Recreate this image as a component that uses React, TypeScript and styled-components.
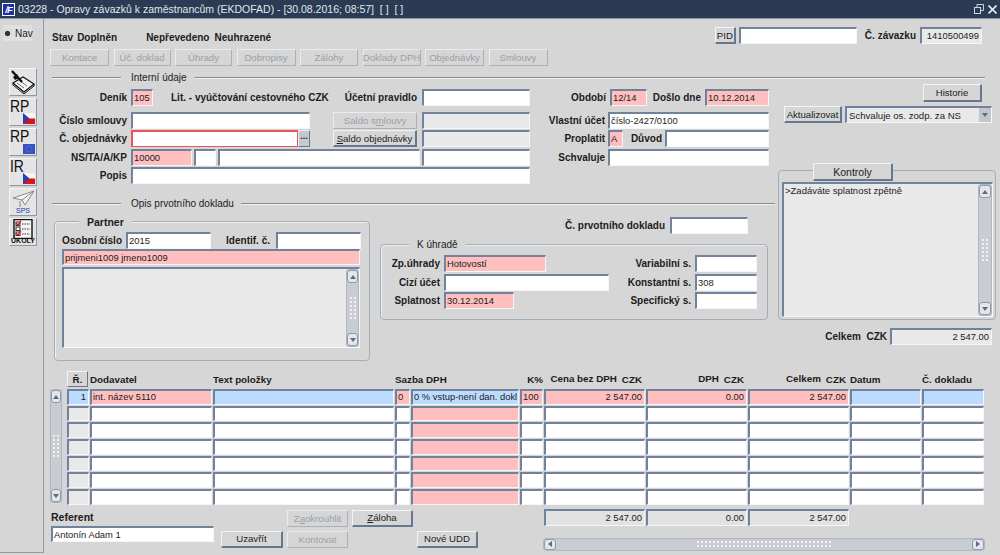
import React from "react";
import styled, { createGlobalStyle } from "styled-components";

const Colors = {
  bg: "#d6d6d6",
  title: "#2a3b53",
  dark: "#71839c",
  light: "#f6f6f6",
  pink: "#ffbfbf",
  blue: "#bbdcff",
  grey: "#e9e9e9",
  text: "#1c1c1c",
  disabled: "#98a1aa",
};

const Global = createGlobalStyle`
  html, body { margin: 0; padding: 0; background: ${Colors.bg}; }
  body { font-family: "Liberation Sans", Arial, sans-serif; font-size: 10px; color: ${Colors.text}; }
`;

const Page = styled.div`
  width: 1000px;
  height: 555px;
  overflow: hidden;
  display: flex;
  flex-direction: column;
  background: ${Colors.bg};
`;

const TitleBar = styled.div`
  height: 19px;
  flex: none;
  background: ${Colors.title};
  color: #e2e6ec;
  font-size: 10.5px;
  display: flex;
  align-items: center;
  padding: 0 2px;
  box-sizing: border-box;
  border-bottom: 1px solid #8d97a5;
`;

const AppLogo = styled.span`
  width: 13px;
  height: 13px;
  box-sizing: border-box;
  border: 1px solid #fff;
  background: #1c2fa8;
  color: #fff;
  font: italic bold 9.5px/11px "Liberation Sans", sans-serif;
  letter-spacing: -1px;
  text-align: center;
  margin-right: 3px;
  flex: none;
`;

const TitleText = styled.span`
  flex: 1;
  white-space: pre;
`;

const Body = styled.div`
  flex: 1;
  display: flex;
  min-height: 0;
`;

const Rail = styled.div`
  width: 44px;
  height: 534px;
  flex: none;
  box-sizing: border-box;
  border-right: 1px solid #8f9bab;
  border-bottom: 1px solid #8f9bab;
  display: flex;
  flex-direction: column;
  align-items: flex-start;
`;

const NavRow = styled.div`
  margin: 6px 0 0 3px;
  height: 16px;
  width: 29px;
  background: #e0e0e0;
  display: flex;
  align-items: center;
  gap: 3px;
  font-size: 10px;
`;

const Radio = styled.span`
  width: 9px;
  height: 9px;
  border-radius: 50%;
  background: radial-gradient(circle, #333 0 35%, #eee 50%, #8b96a6 100%);
  flex: none;
`;

const Tiles = styled.div`
  margin: 27px 0 0 9px;
  display: flex;
  flex-direction: column;
  gap: 2px;
`;

const Tile = styled.div`
  position: relative;
  width: 28px;
  height: 28px;
  box-sizing: border-box;
  background: #e4e4e4;
  border: 1px solid;
  border-color: #f5f5f5 #8b97a8 #8b97a8 #f5f5f5;
  overflow: hidden;
`;

const TileText = styled.span`
  position: absolute;
  left: 0;
  top: -1px;
  font-size: 17px;
  line-height: 18px;
  color: #111;
  transform: scaleX(0.82);
  transform-origin: left top;
`;

const FlagBox = styled.svg`
  position: absolute;
  right: 1px;
  bottom: 1px;
`;

const TileCaption = styled.span<{ $color: string }>`
  position: absolute;
  left: 0;
  right: 0;
  bottom: 0;
  text-align: center;
  font-size: 7px;
  line-height: 8px;
  font-weight: ${(p) => (p.$color === "#111" ? 700 : 400)};
  color: ${(p) => p.$color};
`;

const Main = styled.div`
  flex: 1;
  min-width: 0;
  display: flex;
  flex-direction: column;
`;

const TopBar = styled.div`
  margin-top: 8px;
  height: 17px;
  display: flex;
  align-items: center;
  padding: 0 18px 0 8px;
`;

const StatusGroup = styled.div`
  display: flex;
  padding-top: 4px;
`;

const Strong = styled.span<{ $ml?: number; $w?: number }>`
  font-weight: 700;
  white-space: nowrap;
  flex: none;
  margin-left: ${(p) => p.$ml ?? 0}px;
  ${(p) => (p.$w ? `width: ${p.$w}px;` : "")}
`;

const TopRight = styled.div`
  margin-left: auto;
  display: flex;
  align-items: center;
`;

const Toolbar = styled.div`
  margin: 5px 0 0 6px;
  display: flex;
  gap: 4.5px;
`;

const Btn = styled.div<{ $w: number; $off?: boolean; $h?: number; $ml?: number; $col?: number; $row?: number }>`
  width: ${(p) => p.$w}px;
  height: ${(p) => p.$h ?? 17}px;
  box-sizing: border-box;
  flex: none;
  margin-left: ${(p) => p.$ml ?? 0}px;
  ${(p) => (p.$col ? `grid-column: ${p.$col}; grid-row: ${p.$row};` : "")}
  display: flex;
  align-items: center;
  justify-content: center;
  white-space: nowrap;
  font-size: 9.6px;
  background: ${Colors.bg};
  color: ${(p) => (p.$off ? Colors.disabled : Colors.text)};
  border: 1px solid;
  border-color: ${(p) =>
    p.$off ? "#ececec #a9b1bc #a9b1bc #ececec" : "#f4f4f4 #66788f #66788f #f4f4f4"};
  border-radius: 1px;
  ${(p) => (p.$off ? "" : "border-width: 1px 2px 2px 1px;")}
`;

const Sep = styled.div<{ $w: number; $mt: number }>`
  width: ${(p) => p.$w}px;
  margin: ${(p) => p.$mt}px 0 0 8px;
  height: 10px;
  display: flex;
  align-items: center;
  flex: none;
`;

const SepLine = styled.span<{ $w?: number }>`
  height: 1px;
  background: #8a8a8a;
  box-shadow: 0 1px 0 #f0f0f0;
  ${(p) => (p.$w ? `width: ${p.$w}px; flex: none;` : "flex: 1;")}
`;

const SepTitle = styled.span`
  margin: 0 7px 0 10px;
  white-space: nowrap;
`;

const Split = styled.div`
  margin-top: 2px;
  display: flex;
  height: 276px;
  flex: none;
`;

const LeftPane = styled.div`
  width: 734px;
  flex: none;
`;

const FormRow = styled.div<{ $mt?: number }>`
  display: flex;
  align-items: center;
  height: 17px;
  margin-top: ${(p) => p.$mt ?? 0}px;
`;

const Label = styled.span<{ $w: number; $ml?: number }>`
  width: ${(p) => p.$w}px;
  margin-left: ${(p) => p.$ml ?? 0}px;
  flex: none;
  text-align: right;
  font-weight: 700;
  white-space: nowrap;
`;

type Tone = "white" | "pink" | "blue" | "grey" | "sum";

const toneBg: Record<Tone, string> = {
  white: "#fff",
  pink: Colors.pink,
  blue: Colors.blue,
  grey: Colors.grey,
  sum: "#e2e2e2",
};

const Field = styled.div<{ $w?: number; $ml?: number; $tone?: Tone; $right?: boolean; $alert?: boolean; $h?: number }>`
  ${(p) => (p.$w ? `width: ${p.$w}px; flex: none;` : "")}
  height: ${(p) => (p.$h ? `${p.$h}px` : "17px")};
  margin-left: ${(p) => p.$ml ?? 0}px;
  box-sizing: border-box;
  background: ${(p) => toneBg[p.$tone ?? "white"]};
  border-style: solid;
  border-width: 2px 1px 1px 2px;
  border-color: ${(p) =>
    p.$alert
      ? "#ea5557"
      : `${Colors.dark} ${Colors.light} ${Colors.light} ${Colors.dark}`};
  padding: 0 2px 0 1px;
  font-size: 9.4px;
  line-height: 13px;
  overflow: hidden;
  white-space: nowrap;
  text-align: ${(p) => (p.$right ? "right" : "left")};
  min-width: 0;
`;

const EllipsisBtn = styled.div`
  width: 12px;
  height: 17px;
  flex: none;
  box-sizing: border-box;
  background: #c6c9cf;
  border: 1px solid;
  border-color: #eee #66788f #66788f #eee;
  text-align: center;
  font-weight: 700;
  font-size: 9px;
  line-height: 10px;
`;

const Frame = styled.div<{ $w: number; $h: number; $ml?: number; $mt?: number }>`
  width: ${(p) => p.$w}px;
  height: ${(p) => p.$h}px;
  margin-left: ${(p) => p.$ml ?? 0}px;
  margin-top: ${(p) => p.$mt ?? 0}px;
  box-sizing: border-box;
  flex: none;
  border: 1px solid #a3aebd;
  border-radius: 4px;
  box-shadow: inset 1px 1px 0 #eee;
`;

const Legend = styled.div<{ $ml: number; $bold?: boolean }>`
  display: block;
  width: max-content;
  height: 12px;
  line-height: 12px;
  margin: -6px 0 0 ${(p) => p.$ml}px;
  padding: 0 8px;
  background: ${Colors.bg};
  font-size: ${(p) => (p.$bold ? "10.5px" : "10px")};
  font-weight: ${(p) => (p.$bold ? 700 : 400)};
`;

const Columns = styled.div`
  display: flex;
  align-items: flex-start;
`;

const PartnerInner = styled.div`
  padding-left: 7px;
`;

const PayColumn = styled.div<{ $w?: number }>`
  ${(p) => (p.$w ? `width: ${p.$w}px; flex: none;` : "")}
`;

const MemoBox = styled.div<{ $w: number; $h: number; $mt?: number }>`
  width: ${(p) => p.$w}px;
  height: ${(p) => p.$h}px;
  margin-top: ${(p) => p.$mt ?? 0}px;
  flex: none;
  box-sizing: border-box;
  background: ${Colors.grey};
  border-style: solid;
  border-width: 2px 1px 1px 2px;
  border-color: ${Colors.dark} ${Colors.light} ${Colors.light} ${Colors.dark};
  display: flex;
  justify-content: space-between;
`;

const MemoText = styled.div`
  padding: 1px 0 0 1px;
  font-size: 9.5px;
`;

const ScrollV = styled.div<{ $w: number; $h?: number }>`
  width: ${(p) => p.$w}px;
  ${(p) => (p.$h ? `height: ${p.$h}px;` : "")}
  flex: none;
  display: flex;
  flex-direction: column;
  background: #c9ccd1;
  box-sizing: border-box;
  border: 1px solid #aeb7c3;
  border-radius: 3px;
`;

const ArrowBtn = styled.div`
  height: 13px;
  flex: none;
  background: #e4e6ea;
  border: 1px solid #8e9bad;
  box-sizing: border-box;
  border-radius: 3px;
  display: flex;
  align-items: center;
  justify-content: center;
`;

const ArrowUp = styled.span`
  border: 3px solid transparent;
  border-top: 0;
  border-bottom: 4px solid #5d6c80;
`;

const ArrowDown = styled.span`
  border: 3px solid transparent;
  border-bottom: 0;
  border-top: 4px solid #5d6c80;
`;

const ArrowLeft = styled.span`
  border: 3px solid transparent;
  border-left: 0;
  border-right: 4px solid #5d6c80;
`;

const ArrowRight = styled.span`
  border: 3px solid transparent;
  border-right: 0;
  border-left: 4px solid #5d6c80;
`;

const Track = styled.div`
  flex: 1;
  display: flex;
  align-items: center;
  justify-content: center;
`;

const GripV = styled.span`
  width: 8px;
  height: 24px;
  background-image: radial-gradient(circle, #f2f2f2 0 1px, transparent 1.2px);
  background-size: 4px 4px;
`;

const GripH = styled.span`
  width: 136px;
  height: 8px;
  background-image: radial-gradient(circle, #f2f2f2 0 1px, transparent 1.2px);
  background-size: 4px 4px;
`;

const RightPane = styled.div`
  width: 222px;
  flex: none;
  display: flex;
  flex-direction: column;
`;

const KontrolyFrame = styled.div`
  margin-top: 47px;
  width: 218px;
  height: 150px;
  box-sizing: border-box;
  border: 1px solid #a3aebd;
  border-radius: 4px;
  padding: 0 2px 3px 3px;
  display: flex;
  flex-direction: column;
`;

const KontrolyBtn = styled.div`
  margin: -8px 0 1px 31px;
  width: 80px;
  height: 18px;
  box-sizing: border-box;
  flex: none;
  display: flex;
  align-items: center;
  justify-content: center;
  background: ${Colors.bg};
  border: 1px solid;
  border-color: #f4f4f4 #66788f #66788f #f4f4f4;
  border-width: 1px 2px 2px 1px;
  border-radius: 1px;
  font-size: 10.5px;
`;

const Select = styled.div`
  width: 147px;
  height: 17px;
  margin-left: 3px;
  box-sizing: border-box;
  background: ${Colors.grey};
  border-style: solid;
  border-width: 2px 1px 1px 2px;
  border-color: ${Colors.dark} ${Colors.light} ${Colors.light} ${Colors.dark};
  display: flex;
  align-items: center;
  justify-content: space-between;
  padding-left: 2px;
  font-size: 9.6px;
  white-space: nowrap;
`;

const SelectArrow = styled.span`
  width: 12px;
  height: 14px;
  background: #c3c7cd;
  display: flex;
  align-items: center;
  justify-content: center;
`;

const TableWrap = styled.div`
  margin: 11px 0 0 6px;
  display: flex;
  gap: 5px;
`;

const TableScrollCol = styled.div`
  padding-top: 18px;
  display: flex;
`;

const GRID = "22px 122px 181px 15px 108px 23px 101px 101px 101px 71px 62px";

const Grid = styled.div`
  display: grid;
  grid-template-columns: ${GRID};
  column-gap: 1px;
  grid-auto-rows: 15.67px;
  row-gap: 1px;
`;

const Cell = styled.div<{ $tone: Tone; $right?: boolean }>`
  box-sizing: border-box;
  background: ${(p) => toneBg[p.$tone]};
  border-style: solid;
  border-width: 2px 1px 1px 2px;
  border-color: ${Colors.dark} ${Colors.light} ${Colors.light} ${Colors.dark};
  padding: 0 2px 0 1px;
  font-size: 9.4px;
  line-height: 12px;
  overflow: hidden;
  white-space: nowrap;
  text-align: ${(p) => (p.$right ? "right" : "left")};
`;

const TableBody = styled.div`
  flex: none;
`;

const HeadGrid = styled.div`
  display: grid;
  grid-template-columns: ${GRID};
  column-gap: 1px;
  height: 16px;
  margin-bottom: 2px;
  font-weight: 700;
  font-size: 9.8px;
  align-items: center;
`;

const HeadBtn = styled.div`
  height: 16px;
  box-sizing: border-box;
  margin-right: 1px;
  display: flex;
  align-items: center;
  justify-content: center;
  border: 1px solid;
  border-color: #f4f4f4 #66788f #66788f #f4f4f4;
  font-weight: 700;
`;

const HeadCell = styled.div<{ $right?: number; $span?: number }>`
  white-space: nowrap;
  text-align: ${(p) => (p.$right !== undefined ? "right" : "left")};
  padding-right: ${(p) => p.$right ?? 0}px;
  ${(p) => (p.$span ? `grid-column: span ${p.$span};` : "")}
`;

const Currency = styled.span`
  margin-left: 5px;
  vertical-align: -1px;
`;

const Bottom = styled.div`
  margin: 1px 0 0 7px;
  display: flex;
  align-items: flex-start;
`;

const RefCol = styled.div`
  width: 163px;
  margin-top: 5px;
  flex: none;
  display: flex;
  flex-direction: column;
  gap: 3px;
`;

const RefLabel = styled.span`
  font-weight: 700;
  font-size: 10.5px;
  line-height: 12px;
`;

const Actions = styled.div`
  margin: 4px 0 0 7px;
  display: grid;
  grid-template-columns: 62px 61px 61px 61px;
  column-gap: 4px;
  row-gap: 4px;
  flex: none;
`;

const Totals = styled.div`
  margin: 3px 0 0 66px;
  display: flex;
  flex-direction: column;
  align-items: flex-start;
`;

const TotalsRow = styled.div`
  display: flex;
  gap: 1px;
`;

const ScrollH = styled.div`
  margin: 12px 0 0 -1px;
  width: 442px;
  height: 13px;
  box-sizing: border-box;
  background: #c9ccd1;
  border: 1px solid #aeb7c3;
  border-radius: 3px;
  display: flex;
`;

const ArrowBtnH = styled(ArrowBtn)`
  height: auto;
  width: 12px;
`;

const WinButtons = styled.div`
  display: flex;
  align-items: center;
  gap: 4px;
  margin-right: 1px;
`;

const toolButtons: [string, number][] = [
  ["Kontace", 59],
  ["Úč. doklad", 57],
  ["Úhrady", 57],
  ["Dobropisy", 59],
  ["Zálohy", 58],
  ["Doklady DPH", 58],
  ["Objednávky", 59],
  ["Smlouvy", 59],
];

const CzFlag = () => (
  <FlagBox width="12" height="11" viewBox="0 0 12 11">
    <rect width="12" height="5.5" fill="#f4f4f4" />
    <rect y="5.5" width="12" height="5.5" fill="#d7141a" />
    <path d="M0 0 L6.5 5.5 L0 11 Z" fill="#2a3fb0" />
  </FlagBox>
);

const EuFlag = () => (
  <FlagBox width="12" height="10" viewBox="0 0 12 10">
    <rect width="12" height="10" fill="#3a50c0" />
    <circle cx="6" cy="5" r="3" fill="none" stroke="#7d8fc8" strokeDasharray="1 1" />
  </FlagBox>
);

const VScroll = () => (
  <>
    <ArrowBtn><ArrowUp /></ArrowBtn>
    <Track><GripV /></Track>
    <ArrowBtn><ArrowDown /></ArrowBtn>
  </>
);

const rows = [0, 1, 2, 3, 4, 5];

export default function App() {
  return (
    <Page>
      <Global />
      <TitleBar>
        <AppLogo>/F</AppLogo>
        <TitleText>03228 - Opravy závazků k zaměstnancům (EKDOFAD) - [30.08.2016; 08:57]  [ ]  [ ]</TitleText>
        <WinButtons>
          <svg width="10" height="10" viewBox="0 0 10 10" fill="none" stroke="#cdd3dc">
            <rect x="0.5" y="3.5" width="6" height="6" />
            <path d="M3 3 V0.5 H9.5 V6.5 H7" />
          </svg>
          <svg width="9" height="9" viewBox="0 0 9 9" stroke="#e8ebef" strokeWidth="1.6">
            <path d="M0.5 0.5 L8.5 8.5 M8.5 0.5 L0.5 8.5" />
          </svg>
        </WinButtons>
      </TitleBar>
      <Body>
        <Rail>
          <NavRow><Radio />Nav</NavRow>
          <Tiles>
            <Tile>
              <svg width="26" height="26" viewBox="0 0 26 26">
                <path d="M3 14 L13 8 L24 15 L14 23 Z" fill="#f5f5f5" stroke="#111" strokeWidth="1.2" />
                <path d="M3 14 L3 16 L14 25 L24 17 L24 15" fill="none" stroke="#111" />
                <path d="M7 14 L14 19 M10 12 L17 17" stroke="#777" />
                <path d="M2 2 L12 13" stroke="#111" strokeWidth="2.4" />
                <path d="M3 8 L7 5 L9 9 L5 11 Z" fill="#111" />
              </svg>
            </Tile>
            <Tile><TileText>RP</TileText><CzFlag /></Tile>
            <Tile><TileText>RP</TileText><EuFlag /></Tile>
            <Tile><TileText>IR</TileText><CzFlag /></Tile>
            <Tile>
              <svg width="26" height="19" viewBox="0 0 26 19">
                <path d="M3 9 L24 2 L15 16 L12 11 Z" fill="#f4f4f4" stroke="#8a8a8a" />
                <path d="M12 11 L24 2 M10 12 L10 18" stroke="#8a8a8a" fill="none" />
              </svg>
              <TileCaption $color="#2233aa">SPS</TileCaption>
            </Tile>
            <Tile>
              <svg width="26" height="20" viewBox="0 0 26 20">
                <rect x="4" y="0.5" width="18" height="19" fill="#f5f5f5" stroke="#111" strokeWidth="1.4" />
                <rect x="6" y="3" width="4" height="3.5" fill="#fff" stroke="#333" />
                <rect x="6" y="8" width="4" height="3.5" fill="#fff" stroke="#333" />
                <rect x="6" y="13" width="4" height="3.5" fill="#fff" stroke="#333" />
                <path d="M6 4 L8 6 L11 1.5 M6 14 L8 16 L11 11.5" fill="none" stroke="#d11" strokeWidth="1.3" />
                <path d="M12 5 H20 M12 10 H20 M12 15 H20" stroke="#333" strokeDasharray="1.5 1" />
              </svg>
              <TileCaption $color="#111">ÚKOLY</TileCaption>
            </Tile>
          </Tiles>
        </Rail>
        <Main>
          <TopBar>
            <StatusGroup>
              <Strong>Stav</Strong>
              <Strong $ml={4}>Doplněn</Strong>
              <Strong $ml={29}>Nepřevedeno</Strong>
              <Strong $ml={5}>Neuhrazené</Strong>
            </StatusGroup>
            <TopRight>
              <Btn $w={21}>PID</Btn>
              <Field $w={118} $ml={3} />
              <Strong $ml={8}>Č. závazku</Strong>
              <Field $w={62} $ml={4} $tone="grey" $right>1410500499</Field>
            </TopRight>
          </TopBar>
          <Toolbar>
            {toolButtons.map(([name, w]) => (
              <Btn key={name} $w={w} $off>{name}</Btn>
            ))}
          </Toolbar>
          <Sep $w={933} $mt={6}>
            <SepLine $w={69} />
            <SepTitle>Interní údaje</SepTitle>
            <SepLine />
          </Sep>
          <Split>
            <LeftPane>
              <FormRow $mt={5}>
                <Label $w={83}>Deník</Label>
                <Field $w={22} $ml={4} $tone="pink">105</Field>
                <Strong $ml={18} $w={159}>Lit. - vyúčtování cestovného CZK</Strong>
                <Label $w={87}>Účetní pravidlo</Label>
                <Field $w={108} $ml={5} />
                <Label $w={76}>Období</Label>
                <Field $w={37} $ml={4} $tone="pink">12/14</Field>
                <Label $w={54}>Došlo dne</Label>
                <Field $w={64} $ml={4} $tone="pink">10.12.2014</Field>
              </FormRow>
              <FormRow $mt={6}>
                <Label $w={83}>Číslo smlouvy</Label>
                <Field $w={179} $ml={4} />
                <Btn $w={84} $ml={23} $off>Saldo s<u>m</u>louvy</Btn>
                <Field $w={108} $ml={5} $tone="grey" />
                <Label $w={75}>Vlastní účet</Label>
                <Field $w={161} $ml={3}>číslo-2427/0100</Field>
              </FormRow>
              <FormRow $mt={1}>
                <Label $w={83}>Č. objednávky</Label>
                <Field $w={167} $ml={4} $alert />
                <EllipsisBtn>...</EllipsisBtn>
                <Btn $w={84} $ml={23}><u>S</u>aldo objednávky</Btn>
                <Field $w={108} $ml={5} $tone="grey" />
                <Label $w={75}>Proplatit</Label>
                <Field $w={15} $ml={3} $tone="pink">A</Field>
                <Label $w={39}>Důvod</Label>
                <Field $w={104} $ml={3} />
              </FormRow>
              <FormRow $mt={2}>
                <Label $w={83}>NS/TA/A/KP</Label>
                <Field $w={61} $ml={4} $tone="pink">10000</Field>
                <Field $w={22} $ml={2} />
                <Field $w={202} $ml={2} />
                <Field $w={108} $ml={2} />
                <Label $w={75}>Schvaluje</Label>
                <Field $w={161} $ml={3} />
              </FormRow>
              <FormRow $mt={1}>
                <Label $w={83}>Popis</Label>
                <Field $w={399} $ml={4} />
              </FormRow>
              <Sep $w={723} $mt={14}>
                <SepLine $w={69} />
                <SepTitle>Opis prvotního dokladu</SepTitle>
                <SepLine />
              </Sep>
              <Columns>
                <Frame $w={316} $h={140} $ml={10} $mt={13}>
                  <Legend $ml={24} $bold>Partner</Legend>
                  <PartnerInner>
                    <FormRow $mt={4}>
                      <Label $w={60}>Osobní číslo</Label>
                      <Field $w={85} $ml={4}>2015</Field>
                      <Label $w={59}>Identif. č.</Label>
                      <Field $w={85} $ml={6} />
                    </FormRow>
                    <Field $w={298} $tone="pink" $h={16}>prijmeni1009 jmeno1009</Field>
                    <MemoBox $w={298} $h={81} $mt={2}>
                      <span />
                      <ScrollV $w={13}><VScroll /></ScrollV>
                    </MemoBox>
                  </PartnerInner>
                </Frame>
                <PayColumn>
                  <FormRow $mt={9}>
                    <Label $w={285} $ml={10}>Č. prvotního dokladu</Label>
                    <Field $w={78} $ml={5} />
                  </FormRow>
                  <Frame $w={388} $h={76} $ml={10} $mt={10}>
                    <Legend $ml={28}>K úhradě</Legend>
                    <Columns>
                      <PayColumn $w={244}>
                        <FormRow $mt={4}>
                          <Label $w={59}>Zp.úhrady</Label>
                          <Field $w={102} $ml={4} $tone="pink">Hotovostí</Field>
                        </FormRow>
                        <FormRow $mt={2}>
                          <Label $w={59}>Cizí účet</Label>
                          <Field $w={165} $ml={4} />
                        </FormRow>
                        <FormRow $mt={1}>
                          <Label $w={59}>Splatnost</Label>
                          <Field $w={70} $ml={4} $tone="pink">30.12.2014</Field>
                        </FormRow>
                      </PayColumn>
                      <PayColumn>
                        <FormRow $mt={4}>
                          <Label $w={66}>Variabilní s.</Label>
                          <Field $w={62} $ml={4} />
                        </FormRow>
                        <FormRow $mt={2}>
                          <Label $w={66}>Konstantní s.</Label>
                          <Field $w={62} $ml={4}>308</Field>
                        </FormRow>
                        <FormRow $mt={1}>
                          <Label $w={66}>Specifický s.</Label>
                          <Field $w={62} $ml={4} />
                        </FormRow>
                      </PayColumn>
                    </Columns>
                  </Frame>
                </PayColumn>
              </Columns>
            </LeftPane>
            <RightPane>
              <FormRow>
                <Btn $w={59} $ml={145} $h={18}>Historie</Btn>
              </FormRow>
              <FormRow $mt={5}>
                <Btn $w={58} $ml={6}>Aktualizovat</Btn>
                <Select>
                  Schvaluje os. zodp. za NS
                  <SelectArrow><ArrowDown /></SelectArrow>
                </Select>
              </FormRow>
              <KontrolyFrame>
                <KontrolyBtn>Kontroly</KontrolyBtn>
                <MemoBox $w={211} $h={135}>
                  <MemoText>&gt;Zadáváte splatnost zpětně</MemoText>
                  <ScrollV $w={14}><VScroll /></ScrollV>
                </MemoBox>
              </KontrolyFrame>
              <FormRow $mt={8}>
                <Label $w={109}>Celkem&nbsp; CZK</Label>
                <Field $w={102} $ml={3} $tone="grey" $right>2 547.00</Field>
              </FormRow>
            </RightPane>
          </Split>
          <TableWrap>
            <TableScrollCol>
              <ScrollV $w={12} $h={114}><VScroll /></ScrollV>
            </TableScrollCol>
            <TableBody>
              <HeadGrid>
                <HeadBtn>Ř.</HeadBtn>
                <HeadCell>Dodavatel</HeadCell>
                <HeadCell>Text položky</HeadCell>
                <HeadCell $span={2}>Sazba DPH</HeadCell>
                <HeadCell $right={0}>K%</HeadCell>
                <HeadCell $right={3}>Cena bez DPH<Currency>CZK</Currency></HeadCell>
                <HeadCell $right={3}>DPH<Currency>CZK</Currency></HeadCell>
                <HeadCell $right={3}>Celkem<Currency>CZK</Currency></HeadCell>
                <HeadCell>Datum</HeadCell>
                <HeadCell>Č. dokladu</HeadCell>
              </HeadGrid>
              <Grid>
                <Cell $tone="blue" $right>1</Cell>
                <Cell $tone="pink">int. název 5110</Cell>
                <Cell $tone="blue" />
                <Cell $tone="pink">0</Cell>
                <Cell $tone="blue">0 % vstup-není dan. dokl</Cell>
                <Cell $tone="pink">100</Cell>
                <Cell $tone="pink" $right>2 547.00</Cell>
                <Cell $tone="pink" $right>0.00</Cell>
                <Cell $tone="pink" $right>2 547.00</Cell>
                <Cell $tone="blue" />
                <Cell $tone="blue" />
                {rows.map((r) => (
                  <React.Fragment key={r}>
                    <Cell $tone="grey" />
                    <Cell $tone="white" />
                    <Cell $tone="white" />
                    <Cell $tone="white" />
                    <Cell $tone="pink" />
                    <Cell $tone="white" />
                    <Cell $tone="white" />
                    <Cell $tone="white" />
                    <Cell $tone="white" />
                    <Cell $tone="white" />
                    <Cell $tone="white" />
                  </React.Fragment>
                ))}
              </Grid>
            </TableBody>
          </TableWrap>
          <Bottom>
            <RefCol>
              <RefLabel>Referent</RefLabel>
              <Field $w={163} $h={16}>Antonín Adam 1</Field>
            </RefCol>
            <Actions>
              <Btn $w={61} $off $col={2} $row={1}>Z<u>a</u>okrouhlit</Btn>
              <Btn $w={61} $col={3} $row={1}><u>Z</u>áloha</Btn>
              <Btn $w={62} $col={1} $row={2}>Uzavřít</Btn>
              <Btn $w={61} $off $col={2} $row={2}>Kontovat</Btn>
              <Btn $w={61} $col={4} $row={2}>Nové UDD</Btn>
            </Actions>
            <Totals>
              <TotalsRow>
                <Field $w={101} $tone="sum" $right>2 547.00</Field>
                <Field $w={101} $tone="sum" $right>0.00</Field>
                <Field $w={101} $tone="sum" $right>2 547.00</Field>
              </TotalsRow>
              <ScrollH>
                <ArrowBtnH><ArrowLeft /></ArrowBtnH>
                <Track><GripH /></Track>
                <ArrowBtnH><ArrowRight /></ArrowBtnH>
              </ScrollH>
            </Totals>
          </Bottom>
        </Main>
      </Body>
    </Page>
  );
}
